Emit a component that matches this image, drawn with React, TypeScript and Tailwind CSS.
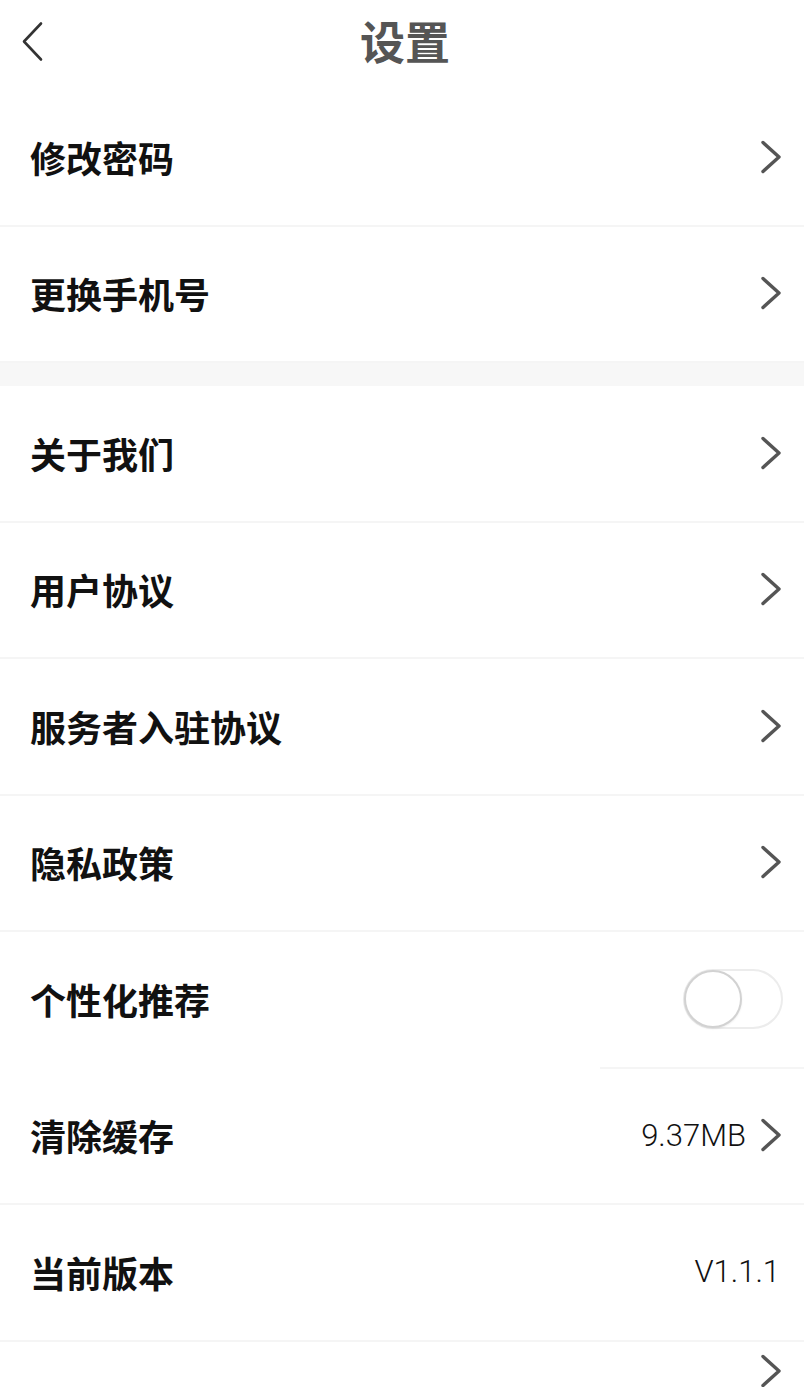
import React from "react";

const CJK = '"Noto Sans CJK SC", "Noto Sans", sans-serif';
const LAT = 'Roboto, "Noto Sans", "Noto Sans CJK SC", sans-serif';

function Chevron() {
  return (
    <svg width="22" height="34" viewBox="0 0 22 34" fill="none" className="shrink-0">
      <path d="M3 2.5 L19 17 L3 31.5" stroke="#555555" strokeWidth="3.4" strokeLinecap="round" strokeLinejoin="round" />
    </svg>
  );
}

function Row({ label, value, chevron = true, toggle = false, line = "full" }: { label: string; value?: string; chevron?: boolean; toggle?: boolean; line?: "full" | "partial" }) {
  return (
    <div className="relative flex h-[136.5px] items-center pb-[3px] pl-[30px] pr-[22px]">
      <div className="flex-1 text-[36px] font-bold text-[#111111] leading-none" style={{ fontFamily: CJK }}>
        {label}
      </div>
      {value && (
        <span className={`text-[31px] font-light text-[#111111] leading-none ${chevron ? "mr-[14px]" : "mr-[2px]"}`} style={{ fontFamily: LAT }}>
          {value}
        </span>
      )}
      {chevron && !toggle && <Chevron />}
      {toggle && (
        <div className="mr-[-1px] flex h-[60px] w-[100px] items-center rounded-full border-2 border-[#ececec] bg-white">
          <div className="ml-[-1px] h-[58px] w-[58px] rounded-full border-2 border-[#d2d2d2] bg-white shadow-[0_1px_2px_rgba(0,0,0,0.08)]" />
        </div>
      )}
      <div className={`absolute bottom-0 right-0 h-[2px] bg-[#f5f5f5] ${line === "partial" ? "left-[600px]" : "left-0"}`} />
    </div>
  );
}

export default function App() {
  return (
    <div className="h-[1387px] w-[804px] overflow-hidden bg-white">
      <div className="relative flex h-[90px] items-center justify-center pb-[10px] pl-[6px]">
        <svg width="24" height="42" viewBox="0 0 24 42" fill="none" className="absolute left-[21px] top-[21px]">
          <path d="M20 2.5 L3 20.5 L20 38.5" stroke="#333333" strokeWidth="2.6" strokeLinecap="round" strokeLinejoin="round" />
        </svg>
        <span className="text-[45px] font-bold text-[#555555] leading-none" style={{ fontFamily: CJK }}>
          设置
        </span>
      </div>
      <Row label="修改密码" />
      <Row label="更换手机号" />
      <div className="h-[23px] bg-[#f7f7f7]" />
      <Row label="关于我们" />
      <Row label="用户协议" />
      <Row label="服务者入驻协议" />
      <Row label="隐私政策" />
      <Row label="个性化推荐" toggle line="partial" />
      <Row label="清除缓存" value="9.37MB" />
      <Row label="当前版本" value="V1.1.1" chevron={false} />
      <div className="flex justify-end pr-[22px] pt-[12px]">
        <Chevron />
      </div>
    </div>
  );
}
